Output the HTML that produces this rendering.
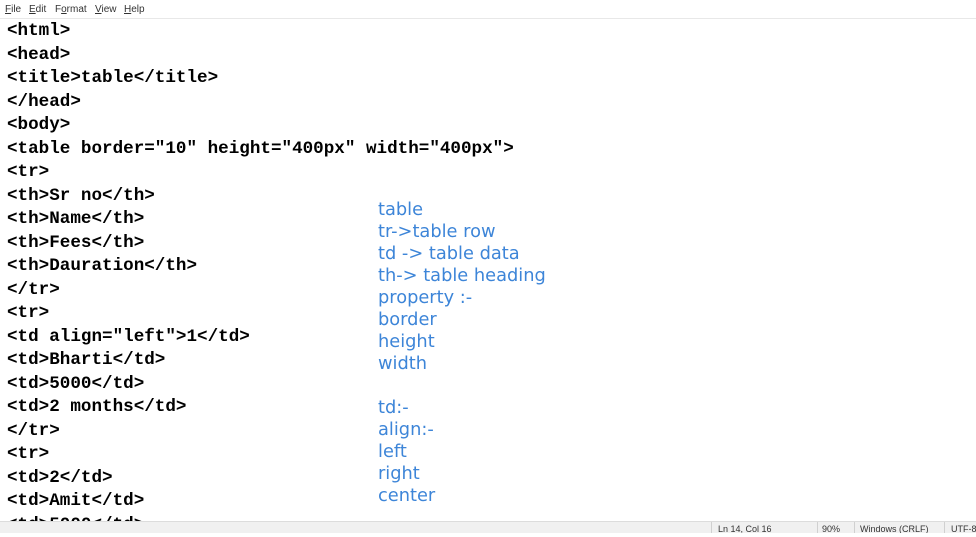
<!DOCTYPE html>
<html><head><style>
body{margin:0;width:976px;height:532px;overflow:hidden;background:#fff;position:relative;font-family:"Liberation Sans",sans-serif}
.menu{position:absolute;top:0;left:0;width:976px;height:18px;background:#fff;border-bottom:1px solid #e8e8e8;font-size:10px;color:#333}
.menu span{position:absolute;top:4px}
.menu u{text-decoration:underline}
.code{position:absolute;left:7px;top:20px;font-family:"Liberation Mono",monospace;font-weight:bold;font-size:17.6px;line-height:23.5px;color:#000;white-space:pre;margin:0}
.notes{position:absolute;left:378px;top:199px;font-family:"DejaVu Sans",sans-serif;font-size:17.8px;line-height:22px;color:#3d85d8;white-space:pre}
.status{position:absolute;left:0;top:521px;width:976px;height:11px;background:#f0f0f0;border-top:1px solid #dcdcdc;font-size:9px;color:#333;white-space:nowrap;overflow:hidden}
.status span{position:absolute;top:2px}
.sep{position:absolute;top:0;width:1px;height:11px;background:#d0d0d0}
</style></head><body>
<div class="menu"><span style="left:5px"><u>F</u>ile</span><span style="left:29px"><u>E</u>dit</span><span style="left:55px">F<u>o</u>rmat</span><span style="left:95px"><u>V</u>iew</span><span style="left:124px"><u>H</u>elp</span></div>
<pre class="code">&lt;html&gt;
&lt;head&gt;
&lt;title&gt;table&lt;/title&gt;
&lt;/head&gt;
&lt;body&gt;
&lt;table border="10" height="400px" width="400px"&gt;
&lt;tr&gt;
&lt;th&gt;Sr no&lt;/th&gt;
&lt;th&gt;Name&lt;/th&gt;
&lt;th&gt;Fees&lt;/th&gt;
&lt;th&gt;Dauration&lt;/th&gt;
&lt;/tr&gt;
&lt;tr&gt;
&lt;td align="left"&gt;1&lt;/td&gt;
&lt;td&gt;Bharti&lt;/td&gt;
&lt;td&gt;5000&lt;/td&gt;
&lt;td&gt;2 months&lt;/td&gt;
&lt;/tr&gt;
&lt;tr&gt;
&lt;td&gt;2&lt;/td&gt;
&lt;td&gt;Amit&lt;/td&gt;
&lt;td&gt;5000&lt;/td&gt;</pre>
<div class="notes">table
tr-&gt;table row
td -&gt; table data
th-&gt; table heading
property :-
border
height
width

td:-
align:-
left
right
center</div>
<div class="status"><div class="sep" style="left:711px"></div><div class="sep" style="left:817px"></div><div class="sep" style="left:854px"></div><div class="sep" style="left:944px"></div><span style="left:718px">Ln 14, Col 16</span><span style="left:822px">90%</span><span style="left:860px">Windows (CRLF)</span><span style="left:951px">UTF-8</span></div>
</body></html>
